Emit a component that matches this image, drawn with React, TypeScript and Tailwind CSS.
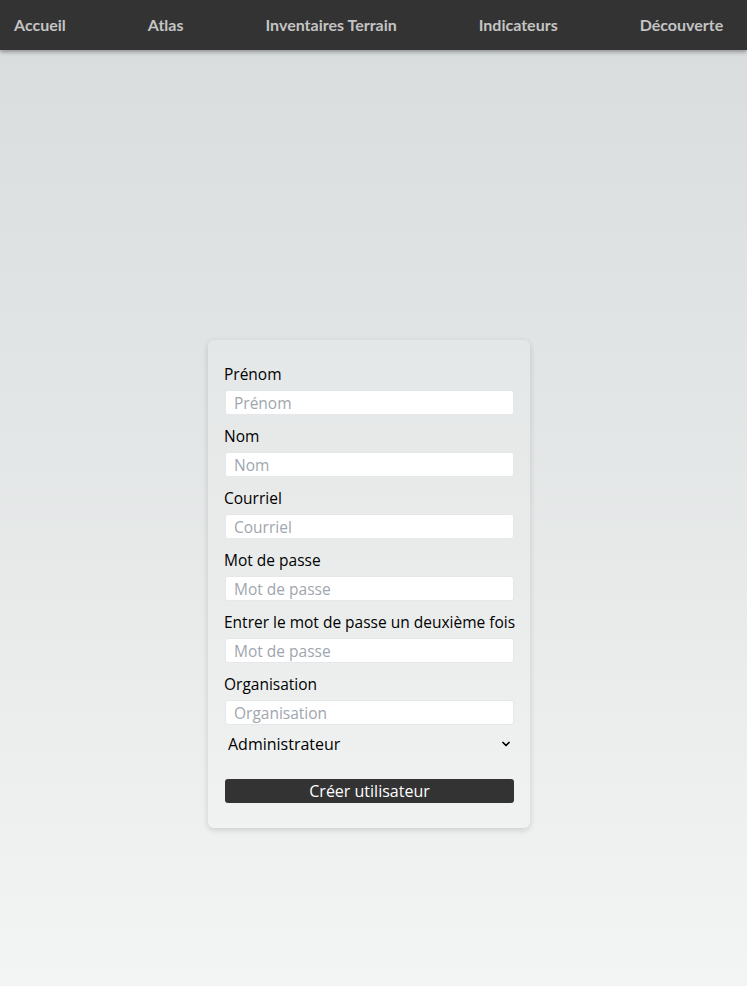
import { ChevronDown } from 'lucide-react'

const navItems = ['Accueil', 'Atlas', 'Inventaires Terrain', 'Indicateurs', 'Découverte']

const fields = [
  { label: 'Prénom', placeholder: 'Prénom', type: 'text' },
  { label: 'Nom', placeholder: 'Nom', type: 'text' },
  { label: 'Courriel', placeholder: 'Courriel', type: 'email' },
  { label: 'Mot de passe', placeholder: 'Mot de passe', type: 'password' },
  { label: 'Entrer le mot de passe un deuxième fois', placeholder: 'Mot de passe', type: 'password' },
  { label: 'Organisation', placeholder: 'Organisation', type: 'text' },
]

export default function App() {
  return (
    <div className="min-h-[986px] flex flex-col bg-gradient-to-b from-[#d8dcdc] to-[#f3f4f4]">
      <nav className="h-[50px] bg-[#333333] flex items-center gap-[82px] pl-[14px] shadow-[0_2px_4px_rgba(0,0,0,0.35)] relative z-10 font-['Lato',sans-serif]">
        {navItems.map((item) => (
          <a key={item} href="#" className="text-[16px] font-bold text-[#c4c4c4]">
            {item}
          </a>
        ))}
      </nav>

      <main className="flex justify-center pr-[9px] pt-[290px]">
        <form
          className="w-[322px] rounded-md bg-white/10 shadow-[0_2px_6px_rgba(0,0,0,0.15)] px-4 pt-[22px] pb-[25px] font-['Open_Sans',sans-serif] text-[15.5px] text-black"
          onSubmit={(e) => e.preventDefault()}
        >
          {fields.map((f, i) => (
            <div key={i} className="mb-[9px]">
              <label className="block leading-6 whitespace-nowrap">{f.label}</label>
              <input
                type={f.type}
                placeholder={f.placeholder}
                className="mt-1 ml-px w-[289px] h-[25px] rounded-[3px] bg-white px-2 text-[15.5px] placeholder:text-[#a0a6ae] outline-none border border-[#e5e7eb]"
              />
            </div>
          ))}

          <div className="relative -mt-[2px] h-[24px] flex items-center">
            <select className="appearance-none w-full bg-transparent pl-1 text-[16px] outline-none">
              <option>Administrateur</option>
              <option>Utilisateur</option>
            </select>
            <ChevronDown className="absolute right-[2px] top-[6px] w-[12px] h-[12px] pointer-events-none" strokeWidth={3.5} />
          </div>

          <button
            type="submit"
            className="mt-[23px] ml-px w-[289px] h-[24px] rounded-[3px] bg-[#333333] text-white text-[16px] leading-6"
          >
            Créer utilisateur
          </button>
        </form>
      </main>
    </div>
  )
}
